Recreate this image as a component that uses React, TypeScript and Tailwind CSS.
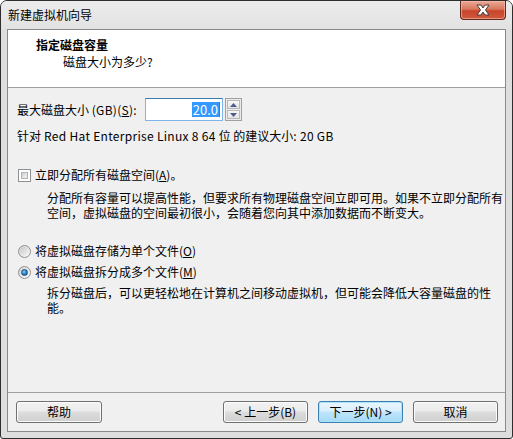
import React from "react";

function Btn({ children, primary = false, className = "" }: { children: React.ReactNode; primary?: boolean; className?: string }) {
  return (
    <div
      className={
        primary
          ? "h-[22px] w-[85px] rounded-[3px] border border-[#3c7fb1] bg-[linear-gradient(#eaf6fd_0%,#d9f0fc_45%,#bee6fd_50%,#a7d9f5_100%)] shadow-[inset_0_0_0_1px_#a9e4fb] flex items-center justify-center leading-[16px] " + className
          : "h-[22px] w-[85px] rounded-[3px] border border-[#707070] bg-[linear-gradient(#f2f2f2_0%,#ebebeb_45%,#dddddd_50%,#cfcfcf_100%)] shadow-[inset_0_0_0_1px_#fcfcfc] flex items-center justify-center leading-[16px] " + className
      }
    >
      {children}
    </div>
  );
}

function Checkbox() {
  return (
    <div className="w-[13px] h-[13px] border border-[#8e8f8f] bg-white p-[2px] shrink-0">
      <div className="w-full h-full bg-[linear-gradient(135deg,#cbcfd5,#f6f6f6)] border border-[#aeb3b9]" />
    </div>
  );
}

function Radio({ checked = false }: { checked?: boolean }) {
  return (
    <div className="w-[13px] h-[13px] rounded-full border border-[#8e8f8f] bg-[linear-gradient(135deg,#d4d4d4,#fafafa)] flex items-center justify-center shrink-0">
      {checked ? (
        <div className="w-[7px] h-[7px] rounded-full bg-[radial-gradient(circle_at_40%_35%,#8fd0f7_0%,#2e8ad3_45%,#0f3f7a_100%)] border border-[#1c4f84]" />
      ) : (
        <div className="w-[9px] h-[9px] rounded-full bg-[linear-gradient(135deg,#c9c9c9,#f7f7f7)]" />
      )}
    </div>
  );
}

export default function App() {
  return (
    <div className="w-[513px] h-[439px] bg-[#dedede] border border-[#2e2e2e] rounded-t-[7px] rounded-b-[3px] flex flex-col overflow-hidden text-[12px] text-black font-['Noto_Sans_CJK_SC',sans-serif]">
      {/* title bar */}
      <div className="h-[28px] flex items-start bg-[linear-gradient(#ececec,#e2e2e2)] shrink-0">
        <div className="pl-[7px] pt-[6px] leading-[16px] text-[#000]">新建虚拟机向导</div>
        <div className="ml-auto mr-[6px] w-[46px] h-[19px] rounded-b-[4px] border border-t-0 border-[#5d2a22] bg-[linear-gradient(#e9a997_0%,#d9785f_45%,#c8452c_55%,#cf5a3d_100%)] shadow-[inset_0_0_0_1px_rgba(255,190,170,0.6)] flex items-center justify-center">
          <svg width="16" height="12" viewBox="0 0 16 12">
            <path d="M2 1 L6 1 L8 4 L10 1 L14 1 L10.5 6 L14 11 L10 11 L8 8 L6 11 L2 11 L5.5 6 Z" fill="#ffffff" stroke="#4a3b38" strokeWidth="1" strokeLinejoin="round" />
          </svg>
        </div>
      </div>

      {/* inner box */}
      <div className="mx-[6px] mb-[6px] flex-1 border border-[#8a8a8a] bg-[#f0f0f0] flex flex-col">
        {/* header */}
        <div className="h-[58px] bg-white border-b border-[#a0a0a0] shrink-0">
          <div className="pl-[28px] pt-[7px] leading-[16px] font-bold">指定磁盘容量</div>
          <div className="pl-[55px] mt-[1px] leading-[16px]">磁盘大小为多少?</div>
        </div>

        {/* body */}
        <div className="flex-1 pl-[9px] flex flex-col">
          <div className="mt-[10px] h-[23px] flex items-center">
            <div className="w-[128px] leading-[16px] whitespace-nowrap">
              最大磁盘大小 <span className="tracking-[0.3px]">(GB)(<span className="underline">S</span>):</span>
            </div>
            <div className="w-[78px] h-[23px] border border-[#7eb4ea] border-t-[#3d7bad] bg-white flex items-center justify-end pr-[2px]">
              <span className="bg-[#3399ff] text-white leading-[15px] px-[1px] text-[13px]">20.0</span>
              <span className="w-[1px] h-[15px] bg-[#c05a10]" />
            </div>
            <div className="ml-[2px] w-[17px] h-[23px] border border-[#a0a0a0] bg-[#ececec] flex flex-col p-[1px] gap-[1px]">
              <div className="flex-1 border border-[#b8b8b8] bg-[linear-gradient(#f7f7f7,#e4e4e4)] flex items-center justify-center">
                <svg width="7" height="4" viewBox="0 0 7 4"><path d="M3.5 0 L7 4 L0 4 Z" fill="#4b5d8c" /></svg>
              </div>
              <div className="flex-1 border border-[#b8b8b8] bg-[linear-gradient(#f7f7f7,#e4e4e4)] flex items-center justify-center">
                <svg width="7" height="4" viewBox="0 0 7 4"><path d="M0 0 L7 0 L3.5 4 Z" fill="#4b5d8c" /></svg>
              </div>
            </div>
          </div>

          <div className="mt-[7px] h-[16px] leading-[16px] whitespace-nowrap">
            针对<span className="tracking-[0.3px]"> Red Hat Enterprise Linux 8 64 </span>位 的建议大小<span className="tracking-[0.3px]">: 20 GB</span>
          </div>

          <div className="mt-[23px] h-[16px] flex items-center gap-[4px] pl-[1px]">
            <Checkbox />
            <div className="leading-[16px]">
              立即分配所有磁盘空间(<span className="underline">A</span>)。
            </div>
          </div>

          <div className="mt-[7px] pl-[30px] leading-[15px] whitespace-nowrap">
            <div>分配所有容量可以提高性能，但要求所有物理磁盘空间立即可用。如果不立即分配所有</div>
            <div>空间，虚拟磁盘的空间最初很小，会随着您向其中添加数据而不断变大。</div>
          </div>

          <div className="mt-[23px] h-[16px] flex items-center gap-[4px] pl-[1px]">
            <Radio />
            <div className="leading-[16px]">
              将虚拟磁盘存储为单个文件(<span className="underline">O</span>)
            </div>
          </div>

          <div className="mt-[5px] h-[16px] flex items-center gap-[4px] pl-[1px]">
            <Radio checked />
            <div className="leading-[16px]">
              将虚拟磁盘拆分成多个文件(<span className="underline">M</span>)
            </div>
          </div>

          <div className="mt-[5px] pl-[30px] leading-[15px] whitespace-nowrap">
            <div>拆分磁盘后，可以更轻松地在计算机之间移动虚拟机，但可能会降低大容量磁盘的性</div>
            <div>能。</div>
          </div>
        </div>

        {/* footer */}
        <div className="h-[39px] border-t border-[#a0a0a0] shrink-0 flex items-start pt-[8px] pl-[8px] pr-[7px]">
          <Btn className="w-[86px]">帮助</Btn>
          <div className="ml-auto flex gap-[10px]">
            <Btn>&lt; 上一步(B)</Btn>
            <Btn primary>下一步(N) &gt;</Btn>
            <Btn>取消</Btn>
          </div>
        </div>
      </div>
    </div>
  );
}
